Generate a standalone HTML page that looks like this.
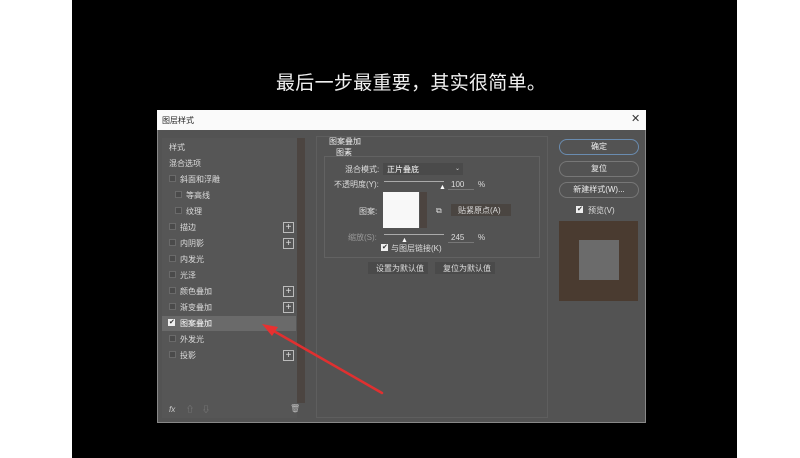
<!DOCTYPE html>
<html><head><meta charset="utf-8"><style>
*{margin:0;padding:0;box-sizing:border-box}
body{width:800px;height:458px;background:#fff;position:relative;overflow:hidden;font-family:"Liberation Sans","Noto Sans CJK SC",sans-serif}
.a{position:absolute}
.t{position:absolute;font-size:8px;color:#ddd;white-space:nowrap;line-height:10px}
.cb{position:absolute;width:7px;height:7px;border:1px solid #6a6a6a;background:#4a4a4a}
.pl{position:absolute;width:11px;height:11px;border:1px solid #bbb;color:#ddd;font-size:10px;line-height:9px;text-align:center}
.btn{position:absolute;border:1px solid #777;border-radius:8px;color:#eee;font-size:8px;text-align:center;line-height:14px;height:16px}
</style></head><body>
<div class="a" style="left:72px;top:0;width:665px;height:458px;background:#000"></div>
<div class="a" style="left:276px;top:68px;font-size:19px;color:#f0f0f0;letter-spacing:0.3px;white-space:nowrap">最后一步最重要，其实很简单。</div>
<!-- dialog -->
<div class="a" style="left:157px;top:110px;width:489px;height:313px;background:#535353;border:1px solid #888"></div>
<div class="a" style="left:157px;top:110px;width:489px;height:20px;background:#fafafa"></div>
<div class="t" style="left:162px;top:116px;color:#222">图层样式</div>
<div class="t" style="left:631px;top:114px;color:#333;font-size:11px">✕</div>
<!-- left panel -->
<div class="a" style="left:162px;top:138px;width:135px;height:280px;background:#565656"></div>
<div class="a" style="left:297px;top:138px;width:8px;height:265px;background:#4c4541"></div>
<div class="a" style="left:162px;top:316px;width:134px;height:15px;background:#6a6a6a"></div>
<div class="t" style="left:169px;top:143px">样式</div>
<div class="t" style="left:169px;top:159px">混合选项</div>
<div class="cb" style="left:169px;top:175px"></div><div class="t" style="left:180px;top:175px">斜面和浮雕</div>
<div class="cb" style="left:175px;top:191px"></div><div class="t" style="left:186px;top:191px">等高线</div>
<div class="cb" style="left:175px;top:207px"></div><div class="t" style="left:186px;top:207px">纹理</div>
<div class="cb" style="left:169px;top:223px"></div><div class="t" style="left:180px;top:223px">描边</div><div class="pl" style="left:283px;top:222px">+</div>
<div class="cb" style="left:169px;top:239px"></div><div class="t" style="left:180px;top:239px">内阴影</div><div class="pl" style="left:283px;top:238px">+</div>
<div class="cb" style="left:169px;top:255px"></div><div class="t" style="left:180px;top:255px">内发光</div>
<div class="cb" style="left:169px;top:271px"></div><div class="t" style="left:180px;top:271px">光泽</div>
<div class="cb" style="left:169px;top:287px"></div><div class="t" style="left:180px;top:287px">颜色叠加</div><div class="pl" style="left:283px;top:286px">+</div>
<div class="cb" style="left:169px;top:303px"></div><div class="t" style="left:180px;top:303px">渐变叠加</div><div class="pl" style="left:283px;top:302px">+</div>
<div class="cb" style="left:168px;top:319px;background:#eee;border-color:#eee;color:#333;font-size:7px;line-height:6px">✔</div><div class="t" style="left:180px;top:319px;color:#fff">图案叠加</div>
<div class="cb" style="left:169px;top:335px"></div><div class="t" style="left:180px;top:335px">外发光</div>
<div class="cb" style="left:169px;top:351px"></div><div class="t" style="left:180px;top:351px">投影</div><div class="pl" style="left:283px;top:350px">+</div>
<div class="t" style="left:169px;top:405px;font-style:italic;color:#ccc">fx</div>
<div class="t" style="left:186px;top:405px;color:#888">⇧</div><div class="t" style="left:202px;top:405px;color:#888">⇩</div>
<div class="t" style="left:290px;top:404px;color:#bbb">🗑</div>
<!-- middle -->
<div class="a" style="left:316px;top:136px;width:232px;height:282px;border:1px solid #5e5e5e"></div>
<div class="t" style="left:329px;top:137px;color:#eee">图案叠加</div>
<div class="t" style="left:336px;top:148px;color:#eee">图素</div>
<div class="a" style="left:324px;top:156px;width:216px;height:102px;border:1px solid #626262"></div>
<div class="t" style="left:345px;top:165px">混合模式:</div>
<div class="a" style="left:383px;top:163px;width:80px;height:12px;background:#4a4a4a"></div>
<div class="t" style="left:387px;top:165px;color:#fff">正片叠底</div><div class="t" style="left:455px;top:164px;font-size:6px">⌄</div>
<div class="t" style="left:334px;top:180px">不透明度(Y):</div>
<div class="a" style="left:384px;top:181px;width:60px;height:1px;background:#aaa"></div>
<div class="t" style="left:439px;top:183px;color:#fff;font-size:7px">▲</div>
<div class="a" style="left:448px;top:179px;width:26px;height:11px;border-bottom:1px solid #777"></div>
<div class="t" style="left:451px;top:180px">100</div><div class="t" style="left:478px;top:180px">%</div>
<div class="a" style="left:383px;top:192px;width:36px;height:36px;background:#f8f8f8"></div>
<div class="a" style="left:420px;top:192px;width:7px;height:36px;background:#4c4440"></div>
<div class="t" style="left:359px;top:207px">图案:</div>
<div class="t" style="left:436px;top:206px">⧉</div>
<div class="a" style="left:451px;top:204px;width:60px;height:12px;background:#4a4541"></div>
<div class="t" style="left:458px;top:206px">贴紧原点(A)</div>
<div class="t" style="left:348px;top:233px;color:#999">缩放(S):</div>
<div class="a" style="left:384px;top:234px;width:60px;height:1px;background:#aaa"></div>
<div class="t" style="left:401px;top:236px;color:#fff;font-size:7px">▲</div>
<div class="a" style="left:448px;top:232px;width:26px;height:11px;border-bottom:1px solid #777"></div>
<div class="t" style="left:451px;top:233px">245</div><div class="t" style="left:478px;top:233px">%</div>
<div class="cb" style="left:381px;top:244px;background:#eee;border-color:#eee;color:#333;font-size:7px;line-height:6px">✔</div>
<div class="t" style="left:391px;top:244px">与图层链接(K)</div>
<div class="a" style="left:368px;top:262px;width:60px;height:12px;background:#4a4a4a"></div>
<div class="t" style="left:376px;top:264px">设置为默认值</div>
<div class="a" style="left:435px;top:262px;width:60px;height:12px;background:#4a4a4a"></div>
<div class="t" style="left:443px;top:264px">复位为默认值</div>
<!-- right -->
<div class="btn" style="left:559px;top:139px;width:80px;border-color:#6a8cb0">确定</div>
<div class="btn" style="left:559px;top:161px;width:80px">复位</div>
<div class="btn" style="left:559px;top:182px;width:80px">新建样式(W)...</div>
<div class="cb" style="left:576px;top:206px;background:#eee;border-color:#eee;color:#333;font-size:7px;line-height:6px">✔</div>
<div class="t" style="left:588px;top:206px">预览(V)</div>
<div class="a" style="left:559px;top:221px;width:79px;height:80px;background:#4a3b30"></div>
<div class="a" style="left:579px;top:240px;width:40px;height:40px;background:#6b6b6b"></div>
<!-- arrow -->
<svg class="a" style="left:0;top:0" width="800" height="458"><line x1="382" y1="393" x2="272" y2="330" stroke="#e03030" stroke-width="2.5" stroke-linecap="round"/><polygon points="262,324 278,327 272,336" fill="#e83030"/></svg>
</body></html>
